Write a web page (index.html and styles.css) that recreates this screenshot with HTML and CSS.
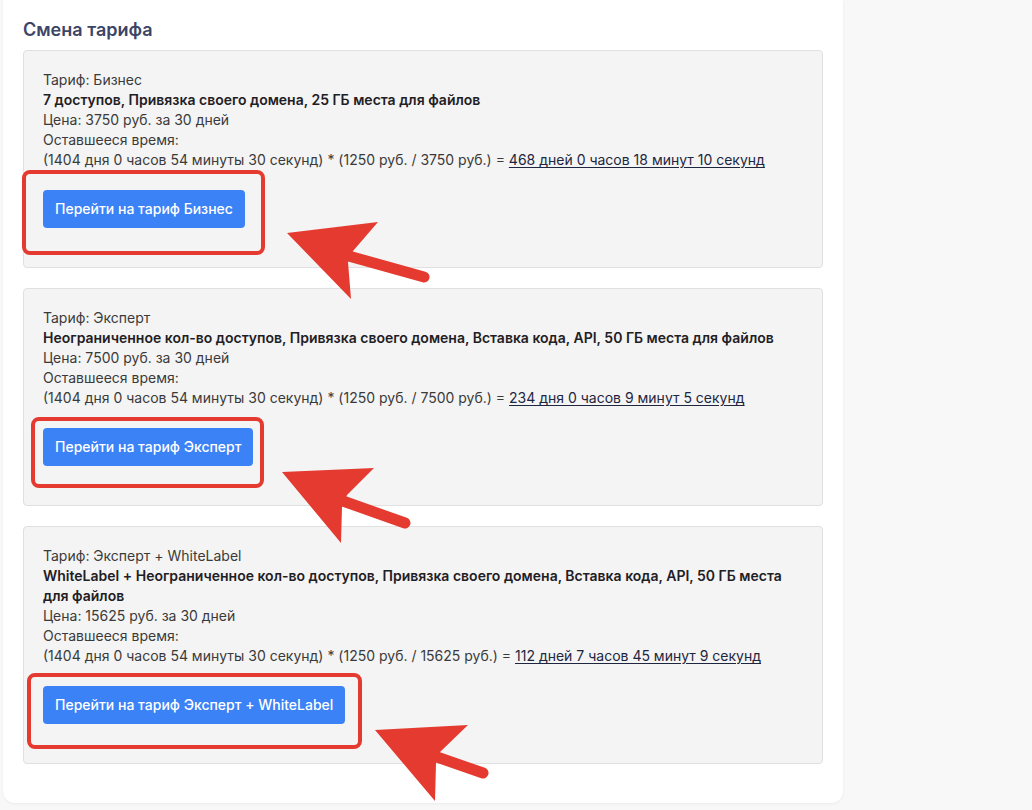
FILE: index.html
```html
<!DOCTYPE html>
<html lang="ru">
<head>
    <meta charset="UTF-8">
    <meta name="viewport" content="width=device-width, initial-scale=1.0">
    <title>Смена тарифа</title>
    <link rel="stylesheet" href="styles.css">
</head>
<body>
    <div class="panel">
        <h2 class="title">Смена тарифа</h2>

        <div class="tariff">
            <div>Тариф: Бизнес</div>
            <div class="features">7 доступов, Привязка своего домена, 25 ГБ места для файлов</div>
            <div>Цена: 3750 руб. за 30 дней</div>
            <div>Оставшееся время:</div>
            <div>(1404 дня 0 часов 54 минуты 30 секунд) * (1250 руб. / 3750 руб.) = <u>468 дней 0 часов 18 минут 10 секунд</u></div>
            <button class="button">Перейти на тариф Бизнес</button>
        </div>

        <div class="tariff">
            <div>Тариф: Эксперт</div>
            <div class="features">Неограниченное кол-во доступов, Привязка своего домена, Вставка кода, API, 50 ГБ места для файлов</div>
            <div>Цена: 7500 руб. за 30 дней</div>
            <div>Оставшееся время:</div>
            <div>(1404 дня 0 часов 54 минуты 30 секунд) * (1250 руб. / 7500 руб.) = <u>234 дня 0 часов 9 минут 5 секунд</u></div>
            <button class="button">Перейти на тариф Эксперт</button>
        </div>

        <div class="tariff">
            <div>Тариф: Эксперт + WhiteLabel</div>
            <div class="features">WhiteLabel + Неограниченное кол-во доступов, Привязка своего домена, Вставка кода, API, 50 ГБ места для файлов</div>
            <div>Цена: 15625 руб. за 30 дней</div>
            <div>Оставшееся время:</div>
            <div>(1404 дня 0 часов 54 минуты 30 секунд) * (1250 руб. / 15625 руб.) = <u>112 дней 7 часов 45 минут 9 секунд</u></div>
            <button class="button">Перейти на тариф Эксперт + WhiteLabel</button>
        </div>
    </div>

    <!-- annotation layer drawn over the screenshot -->
    <svg class="marks" width="1032" height="810" viewBox="0 0 1032 810">
        <g fill="none" stroke="#e53a30" stroke-width="4">
            <rect x="24" y="172" width="239" height="81" rx="6"/>
            <rect x="33" y="419" width="229" height="67" rx="6"/>
            <rect x="29" y="675" width="331" height="72" rx="6"/>
        </g>
        <g fill="#e53a30" stroke="#e53a30" stroke-linecap="round">
            <line x1="345" y1="255" x2="424" y2="277" stroke-width="11"/>
            <polygon points="287,233 378,222 353,251 348,262 351,299" stroke="none"/>

            <line x1="340" y1="500" x2="405" y2="523" stroke-width="11"/>
            <polygon points="282,472 374,468 347,495 342,507 341,543" stroke="none"/>

            <line x1="434" y1="756" x2="483" y2="773" stroke-width="11"/>
            <polygon points="375,730 468,725 440,752 436,763 435,801" stroke="none"/>
        </g>
    </svg>
</body>
</html>
```

FILE: styles.css
```css
body {
    margin: 0;
    padding: 0 0 0 3px;
    position: relative;
    min-height: 810px;
    background: #f8f8f8;
    font-family: Inter, "Noto Sans", sans-serif;
    font-size: 14px;
    line-height: 20px;
    color: #3a3a3a;
}
.panel {
    width: 800px;
    padding: 18px 20px 39px;
    background: #ffffff;
    border-radius: 0 0 12px 12px;
    box-shadow: 0 1px 3px rgba(0, 0, 0, 0.06);
}
.title {
    margin: 0 0 8px;
    font-size: 18px;
    line-height: 24px;
    font-weight: 600;
    color: #3c4566;
}
.tariff {
    padding: 19px 19px 39px;
    margin-bottom: 20px;
    background: #f4f4f4;
    border: 1px solid #e0e0e0;
    border-radius: 4px;
}
.tariff:last-child {
    margin-bottom: 0;
}
.features {
    font-weight: 600;
    color: #1f2024;
}
.tariff u {
    color: #1e2640;
    text-underline-offset: 2px;
}
.button {
    display: block;
    margin-top: 20px;
    padding: 9px 12px;
    font-family: inherit;
    font-size: 14px;
    line-height: 20px;
    font-weight: 500;
    color: #ffffff;
    background: #3b82f6;
    border: none;
    border-radius: 4px;
    cursor: pointer;
}
.marks {
    position: absolute;
    top: 0;
    left: 0;
    pointer-events: none;
}
```
